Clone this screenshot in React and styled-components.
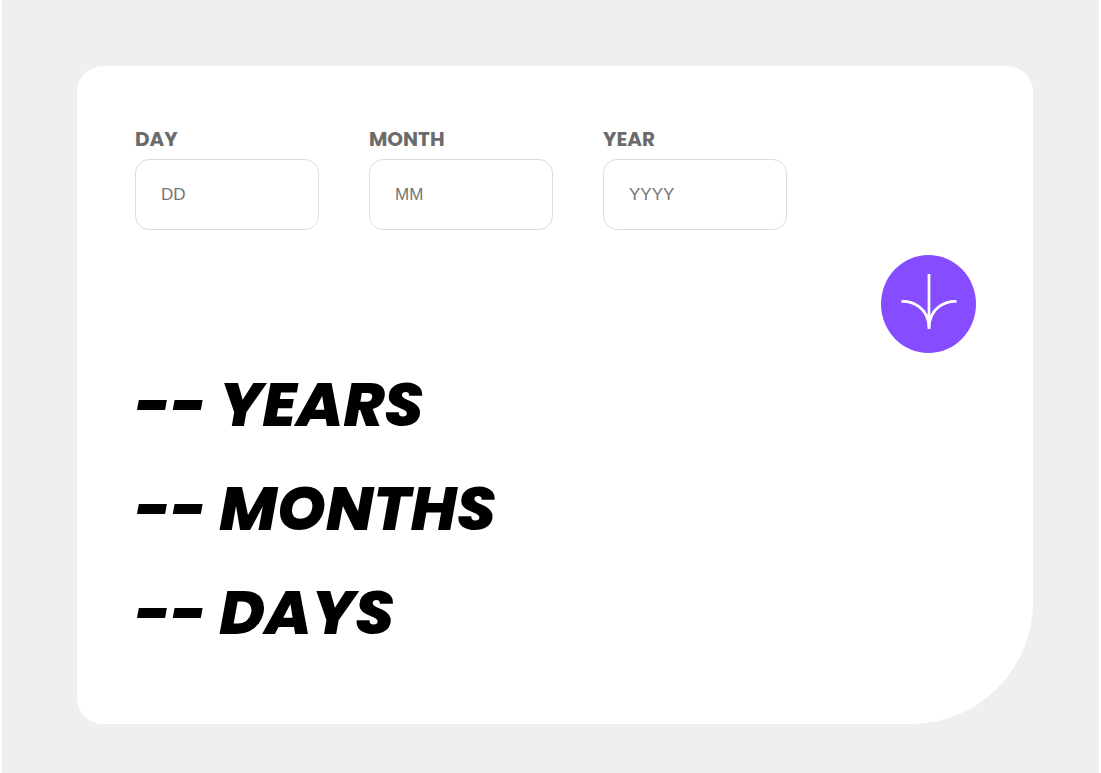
import React, { useState } from 'react';
import styled, { createGlobalStyle } from 'styled-components';

const GlobalStyle = createGlobalStyle`
  * {
    box-sizing: border-box;
  }
  body {
    margin: 0;
    background: #ffffff;
    font-family: Poppins, Inter, sans-serif;
  }
`;

const Page = styled.main`
  min-height: 100vh;
  margin: 0 2px;
  padding: 66px 66px 49px 75px;
  background: #efefef;
`;

const Card = styled.form`
  padding: 58px 57px 59px 58px;
  border-radius: 26px 26px 122px 26px;
  background: #ffffff;
`;

const Fields = styled.div`
  display: flex;
  gap: 50px;
`;

const Field = styled.div`
  display: flex;
  flex: 0 1 184px;
  flex-direction: column;
  gap: 5px;
  min-width: 0;
`;

const Label = styled.label`
  color: #6b6b6b;
  font-size: 20px;
  font-weight: 700;
  line-height: 30px;
`;

const Input = styled.input`
  width: 100%;
  height: 71px;
  padding: 0 25px;
  border: 1px solid #dcdcdc;
  border-radius: 14px;
  background: #ffffff;
  font-family: "Liberation Sans", Arial, sans-serif;
  font-size: 17px;
  ::placeholder {
    color: #757575;
  }
`;

const Actions = styled.div`
  display: flex;
  justify-content: flex-end;
  padding-top: 25px;
`;

const SubmitButton = styled.button`
  display: flex;
  align-items: center;
  justify-content: center;
  width: 95px;
  height: 98px;
  padding: 0 0 6px;
  border: 0;
  border-radius: 50%;
  background: #854dff;
  cursor: pointer;
`;

const Result = styled.p`
  margin: 0;
  color: #000000;
  font-size: 62px;
  font-style: italic;
  font-weight: 800;
  line-height: 104px;
`;

const FIELDS = [
  { name: 'day', label: 'DAY', placeholder: 'DD' },
  { name: 'month', label: 'MONTH', placeholder: 'MM' },
  { name: 'year', label: 'YEAR', placeholder: 'YYYY' },
];

const getAge = ({ day, month, year }) => {
  const birth = new Date(Number(year), Number(month) - 1, Number(day));
  const today = new Date();
  if (!day || !month || !year || Number.isNaN(birth.getTime()) || birth > today) {
    return {};
  }
  let years = today.getFullYear() - birth.getFullYear();
  let months = today.getMonth() - birth.getMonth();
  let days = today.getDate() - birth.getDate();
  if (days < 0) {
    months -= 1;
    days += new Date(today.getFullYear(), today.getMonth(), 0).getDate();
  }
  if (months < 0) {
    years -= 1;
    months += 12;
  }
  return { years, months, days };
};

const ArrowIcon = () => (
  <svg width="58" height="55" viewBox="0 0 46 44" fill="none" stroke="#ffffff" strokeWidth="2.2" aria-hidden="true">
    <path d="M1 22.019C8.333 21.686 23 25.616 23 44M23 44V0M45 22.019C37.667 21.686 23 25.616 23 44" />
  </svg>
);

const App = () => {
  const [values, setValues] = useState({ day: '', month: '', year: '' });
  const [age, setAge] = useState({});

  const handleChange = event => {
    setValues({ ...values, [event.target.name]: event.target.value });
  };

  const handleSubmit = event => {
    event.preventDefault();
    setAge(getAge(values));
  };

  return (
    <>
      <GlobalStyle />
      <Page>
        <Card onSubmit={handleSubmit}>
          <Fields>
            {FIELDS.map(field => (
              <Field key={field.name}>
                <Label htmlFor={field.name}>{field.label}</Label>
                <Input
                  id={field.name}
                  name={field.name}
                  inputMode="numeric"
                  placeholder={field.placeholder}
                  value={values[field.name]}
                  onChange={handleChange}
                />
              </Field>
            ))}
          </Fields>
          <Actions>
            <SubmitButton type="submit" aria-label="Calculate age">
              <ArrowIcon />
            </SubmitButton>
          </Actions>
          {['years', 'months', 'days'].map(unit => (
            <Result key={unit}>{`${age[unit] ?? '--'} ${unit.toUpperCase()}`}</Result>
          ))}
        </Card>
      </Page>
    </>
  );
};

export default App;
